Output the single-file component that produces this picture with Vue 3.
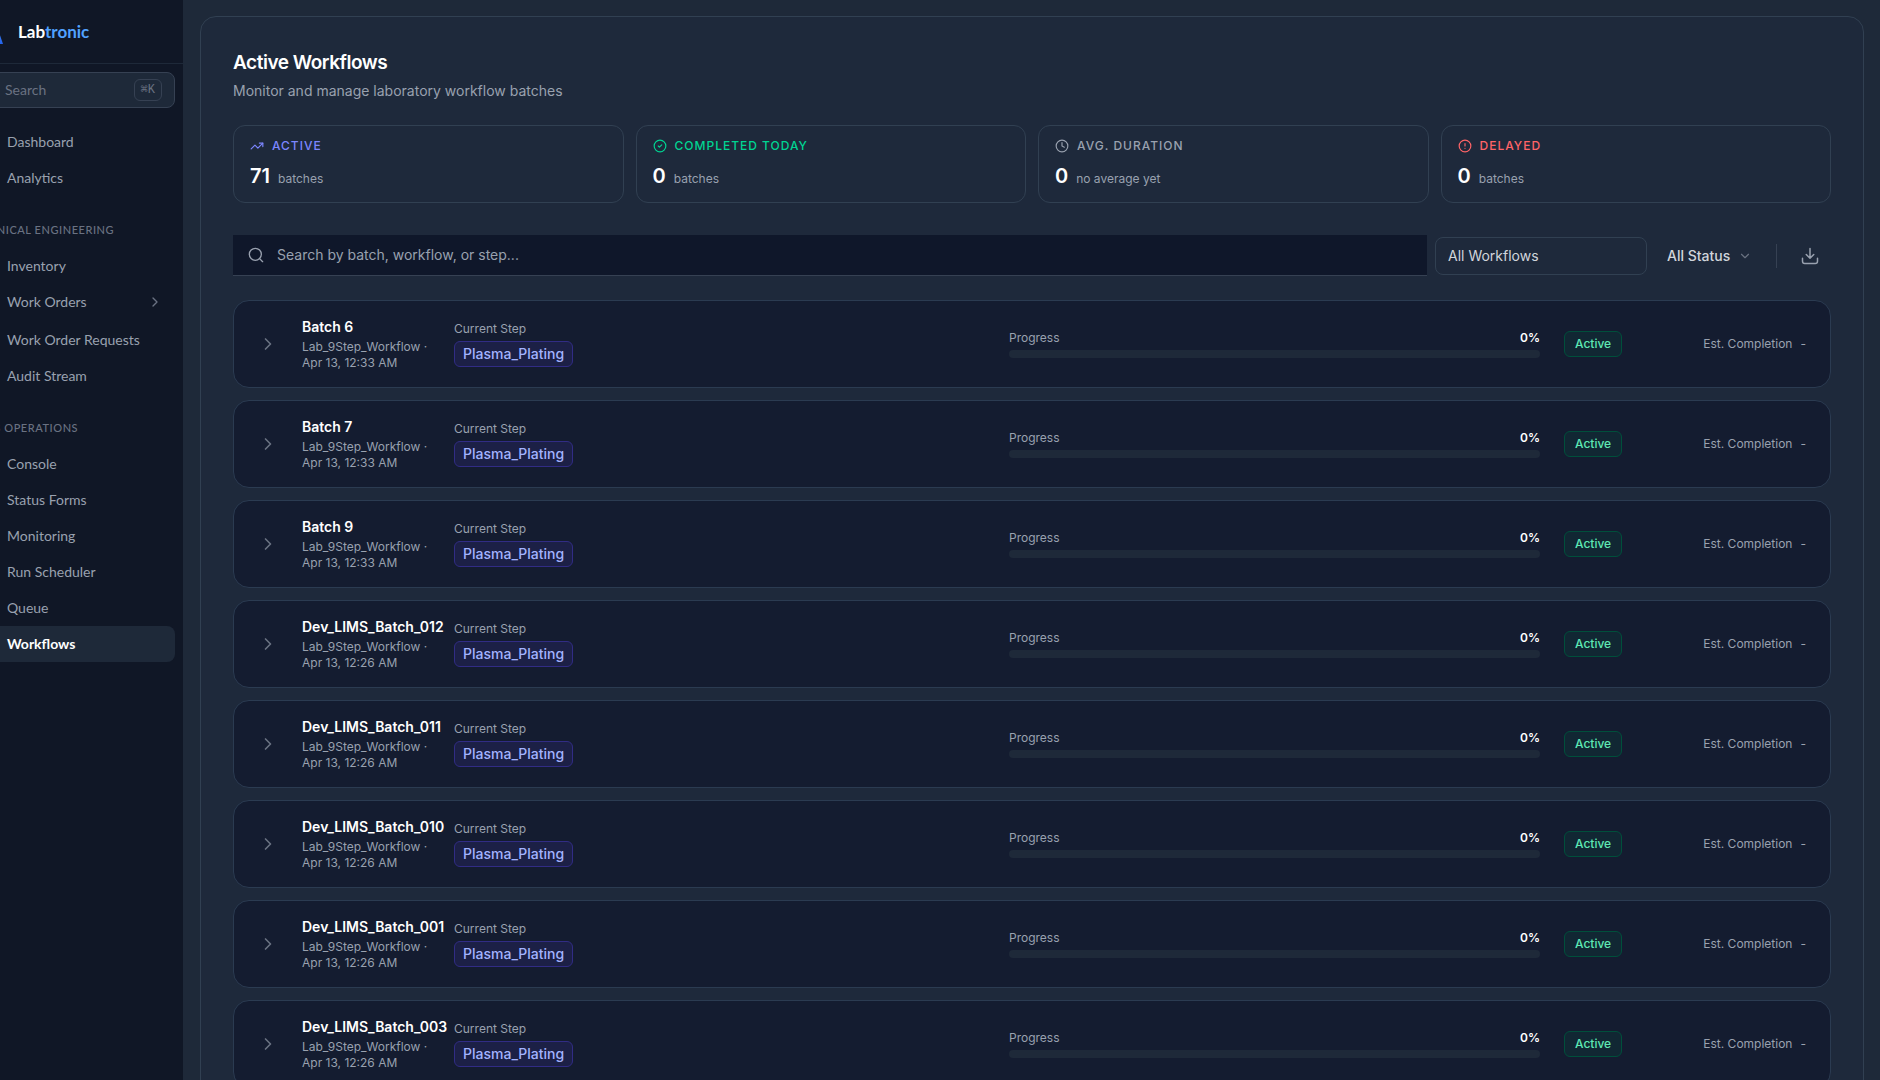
<script setup>
import { ref } from 'vue'

const mainLinks = ['Dashboard', 'Analytics']
const groups = [
  {
    title: 'CLINICAL ENGINEERING',
    links: ['Inventory', 'Work Orders', 'Work Order Requests', 'Audit Stream'],
  },
  {
    title: 'LAB OPERATIONS',
    links: ['Console', 'Status Forms', 'Monitoring', 'Run Scheduler', 'Queue', 'Workflows'],
  },
]

const stats = [
  { id: 'active', label: 'ACTIVE', value: 71, note: 'batches' },
  { id: 'done', label: 'COMPLETED TODAY', value: 0, note: 'batches' },
  { id: 'duration', label: 'AVG. DURATION', value: 0, note: 'no average yet' },
  { id: 'delayed', label: 'DELAYED', value: 0, note: 'batches' },
]

const batches = [
  ['Batch 6', 'Apr 13, 12:33 AM'],
  ['Batch 7', 'Apr 13, 12:33 AM'],
  ['Batch 9', 'Apr 13, 12:33 AM'],
  ['Dev_LIMS_Batch_012', 'Apr 13, 12:26 AM'],
  ['Dev_LIMS_Batch_011', 'Apr 13, 12:26 AM'],
  ['Dev_LIMS_Batch_010', 'Apr 13, 12:26 AM'],
  ['Dev_LIMS_Batch_001', 'Apr 13, 12:26 AM'],
  ['Dev_LIMS_Batch_003', 'Apr 13, 12:26 AM'],
].map(([name, date]) => ({ name, date, workflow: 'Lab_9Step_Workflow', step: 'Plasma_Plating', progress: 0 }))

const query = ref('')
</script>

<template>
  <div class="app">
    <aside class="sidebar">
      <a class="brand" href="#" aria-label="Labtronic">
        <svg class="logo" viewBox="0 0 32 32" aria-hidden="true">
          <defs>
            <linearGradient id="brand-fill" x1="0" y1="0" x2="0" y2="1">
              <stop offset="0" stop-color="#51a2ff" />
              <stop offset="1" stop-color="#2563eb" />
            </linearGradient>
          </defs>
          <path d="M10 2h12l9 26h-8l-7-16-7 16H1z" fill="url(#brand-fill)" />
        </svg>
        <span class="brand-name">Lab<span>tronic</span></span>
      </a>

      <button class="quick-search" type="button">
        <span>Search</span>
        <kbd>⌘K</kbd>
      </button>

      <nav>
        <a v-for="link in mainLinks" :key="link" class="nav-link" href="#">{{ link }}</a>
        <section v-for="group in groups" :key="group.title" class="nav-group">
          <h2>{{ group.title }}</h2>
          <a
            v-for="link in group.links"
            :key="link"
            href="#"
            class="nav-link"
            :class="{ current: link === 'Workflows', parent: link === 'Work Orders' }"
          >
            {{ link }}
            <svg v-if="link === 'Work Orders'" class="icon" viewBox="0 0 24 24" aria-hidden="true">
              <path d="m9 18 6-6-6-6" />
            </svg>
          </a>
        </section>
      </nav>
    </aside>

    <main>
      <div class="panel">
        <header>
          <h1>Active Workflows</h1>
          <p>Monitor and manage laboratory workflow batches</p>
        </header>

        <div class="stats">
          <article v-for="s in stats" :key="s.id" class="stat">
            <div class="stat-label" :class="s.id">
              <svg class="icon" viewBox="0 0 24 24" aria-hidden="true">
                <template v-if="s.id === 'active'">
                  <path d="M16 7h6v6" />
                  <path d="m22 7-8.500 8.500-5-5L2 17" />
                </template>
                <template v-else>
                  <circle cx="12" cy="12" r="10" />
                  <path v-if="s.id === 'done'" d="m9 12 2 2 4-4" />
                  <path v-if="s.id === 'duration'" d="M12 6v6l4 2" />
                  <path v-if="s.id === 'delayed'" d="M12 8v4m0 4h.01" />
                </template>
              </svg>
              {{ s.label }}
            </div>
            <div class="stat-value">
              <strong>{{ s.value }}</strong>
              <span>{{ s.note }}</span>
            </div>
          </article>
        </div>

        <div class="toolbar">
          <label class="search">
            <svg class="icon" viewBox="0 0 24 24" aria-hidden="true">
              <circle cx="11" cy="11" r="9" />
              <path d="m22 22-4.600-4.600" />
            </svg>
            <input v-model="query" type="text" aria-label="Search batches" placeholder="Search by batch, workflow, or step..." />
          </label>
          <select class="workflow-select" aria-label="Workflow">
            <option>All Workflows</option>
          </select>
          <label class="status">
            <select aria-label="Status">
              <option>All Status</option>
            </select>
            <svg class="icon" viewBox="0 0 24 24" aria-hidden="true"><path d="m6 9 6 6 6-6" /></svg>
          </label>
          <span class="divider"></span>
          <button class="download" type="button" aria-label="Download">
            <svg class="icon" viewBox="0 0 24 24" aria-hidden="true">
              <path d="M12 2v13m-5-5 5 5 5-5M2 15v4a3 3 0 0 0 3 3h14a3 3 0 0 0 3-3v-4" />
            </svg>
          </button>
        </div>

        <div class="batches">
          <article v-for="b in batches" :key="b.name" class="batch">
            <button class="expand" type="button" :aria-label="`Expand ${b.name}`">
              <svg class="icon" viewBox="0 0 24 24" aria-hidden="true"><path d="m9 18 6-6-6-6" /></svg>
            </button>
            <div class="identity">
              <h3>{{ b.name }}</h3>
              <p>{{ b.workflow }} · {{ b.date }}</p>
            </div>
            <div class="step">
              <span class="caption">Current Step</span>
              <span class="step-tag">{{ b.step }}</span>
            </div>
            <div class="progress">
              <div class="progress-head">
                <span class="caption">Progress</span>
                <b>{{ b.progress }}%</b>
              </div>
              <div class="track"><div class="fill" :style="{ width: b.progress + '%' }"></div></div>
            </div>
            <div><span class="state">Active</span></div>
            <div class="estimate"><span>Est. Completion</span><span>-</span></div>
          </article>
        </div>
      </div>
    </main>
  </div>
</template>

<style>
body {
  margin: 0;
  background: #1e2939;
}
</style>

<style scoped>
* {
  box-sizing: border-box;
}
h1, h2, h3, p {
  margin: 0;
}
button, select, input {
  font: inherit;
  color: inherit;
  background: none;
  border: 0;
  padding: 0;
  margin: 0;
  appearance: none;
  outline: none;
}
a {
  color: inherit;
  text-decoration: none;
}
.icon {
  width: 16px;
  height: 16px;
  flex: none;
  fill: none;
  stroke: currentColor;
  stroke-width: 2;
  stroke-linecap: round;
  stroke-linejoin: round;
}
.app {
  display: flex;
  height: 100vh;
  overflow: hidden;
  font: 14px/20px Inter, sans-serif;
  color: #99a1af;
  background: #1e2939;
}

/* The sidebar is slid partly past the left window edge. */
.sidebar {
  flex: none;
  width: 240px;
  margin-left: -57px;
  background: #101726;
  font-family: Lato, sans-serif;
}
.brand {
  display: flex;
  align-items: center;
  gap: 14px;
  height: 64px;
  padding-left: 29px;
  border-bottom: 1px solid #1e2939;
}
.logo {
  width: 32px;
  height: 32px;
}
.brand-name {
  font-size: 17px;
  font-weight: 700;
  color: #fff;
}
.brand-name span {
  color: #51a2ff;
}
.quick-search {
  display: flex;
  align-items: center;
  justify-content: space-between;
  width: 224px;
  height: 36px;
  margin: 8px 8px 16px;
  padding: 0 12px 0 53px;
  border: 1px solid #364153;
  border-radius: 8px;
  background: #1e2939;
  color: #6a7282;
}
kbd {
  padding: 0 6px;
  border: 1px solid #364153;
  border-radius: 6px;
  font: 12px/20px "Liberation Mono", "DejaVu Sans Mono", monospace;
}
.nav-link {
  display: flex;
  align-items: center;
  justify-content: space-between;
  height: 36px;
  margin: 0 8px;
  padding: 0 12px 0 56px;
  border-radius: 8px;
}
.nav-link.parent {
  margin-bottom: 2px;
}
.nav-link .icon {
  color: #6a7282;
}
.nav-link.current {
  background: #1e2939;
  color: #fff;
  font-weight: 700;
}
.nav-group h2 {
  padding: 24px 0 8px 36px;
  font-size: 11px;
  line-height: 20px;
  font-weight: 500;
  letter-spacing: 0.05em;
  white-space: nowrap;
  color: #6a7282;
}

main {
  flex: 1;
  min-width: 0;
  padding: 16px 16px 16px 17px;
}
.panel {
  padding: 32px;
  border: 1px solid #314052;
  border-radius: 16px;
  background: #1e293b;
}
h1 {
  font-size: 19px;
  line-height: 28px;
  font-weight: 600;
  letter-spacing: -0.025em;
  color: #fff;
}
header p {
  margin-top: 4px;
}
.stats {
  display: grid;
  grid-template-columns: repeat(4, 1fr);
  gap: 12px;
  margin-top: 24px;
}
.stat {
  height: 78px;
  padding: 12px 16px;
  border: 1px solid #314052;
  border-radius: 12px;
}
.stat-label {
  display: flex;
  align-items: center;
  gap: 8px;
  font-size: 12px;
  line-height: 16px;
  font-weight: 500;
  letter-spacing: 1px;
}
.stat-label .icon {
  width: 14px;
  height: 14px;
}
.stat-label.active {
  color: #7c86ff;
}
.stat-label.done {
  color: #00d492;
}
.stat-label.delayed {
  color: #ff6467;
}
.stat-value {
  display: flex;
  align-items: baseline;
  gap: 8px;
  margin-top: 8px;
  font-size: 12px;
  line-height: 28px;
}
.stat-value strong {
  font-size: 20px;
  font-weight: 600;
  color: #fff;
}

.toolbar {
  display: flex;
  align-items: center;
  margin-top: 32px;
}
.search {
  display: flex;
  flex: 1;
  align-items: center;
  gap: 13px;
  height: 41px;
  margin-right: 8px;
  padding: 0 15px;
  border-bottom: 1px solid #364153;
  background: #0f172a;
}
.search input {
  flex: 1;
}
.search input::placeholder {
  color: #99a1af;
  opacity: 1;
}
.workflow-select {
  width: 212px;
  height: 38px;
  padding: 0 12px;
  border: 1px solid #314052;
  border-radius: 8px;
  color: #d1d5dc;
}
.status {
  display: flex;
  align-items: center;
  gap: 7px;
  margin-left: 20px;
  font-weight: 500;
  color: #d1d5dc;
}
.status .icon {
  width: 14px;
  height: 14px;
  color: #6a7282;
}
.divider {
  width: 1px;
  height: 24px;
  margin: 0 12px 0 24px;
  background: #364153;
}
.download {
  display: grid;
  place-items: center;
  width: 42px;
  height: 36px;
}
.download .icon {
  width: 18px;
  height: 18px;
}

.batches {
  display: grid;
  gap: 12px;
  margin-top: 24px;
}
.batch {
  display: grid;
  grid-template-columns: 20px 128px 1fr 1fr 96px 122px;
  align-items: center;
  gap: 24px;
  height: 88px;
  padding: 0 24px;
  border: 1px solid #2b3b51;
  border-radius: 16px;
  background: #141c30;
  font-size: 12px;
  line-height: 16px;
}
.expand {
  display: grid;
  place-items: center;
  height: 20px;
  color: #6a7282;
}
.expand .icon {
  width: 20px;
  height: 20px;
}
.identity h3 {
  margin-bottom: 2px;
  font-size: 14px;
  line-height: 20px;
  font-weight: 600;
  white-space: nowrap;
  color: #fff;
}
.step {
  display: flex;
  flex-direction: column;
  align-items: flex-start;
  gap: 4px;
}
.step-tag {
  padding: 2px 8px;
  border: 1px solid #312c85;
  border-radius: 6px;
  background: #1c2046;
  font-size: 14px;
  line-height: 20px;
  font-weight: 500;
  color: #a3b3ff;
}
.progress-head {
  display: flex;
  justify-content: space-between;
  margin-bottom: 4px;
}
.progress b {
  font-weight: 600;
  color: #fff;
}
.track {
  height: 8px;
  border-radius: 4px;
  background: #1e2939;
}
.fill {
  height: 100%;
  border-radius: 4px;
  background: #615fff;
}
.state {
  display: inline-block;
  padding: 4px 10px;
  border: 1px solid #004f3b;
  border-radius: 6px;
  background: #112733;
  font-weight: 500;
  color: #5ee9b5;
}
.estimate {
  display: flex;
  justify-content: flex-end;
  gap: 8px;
  white-space: nowrap;
}
</style>
